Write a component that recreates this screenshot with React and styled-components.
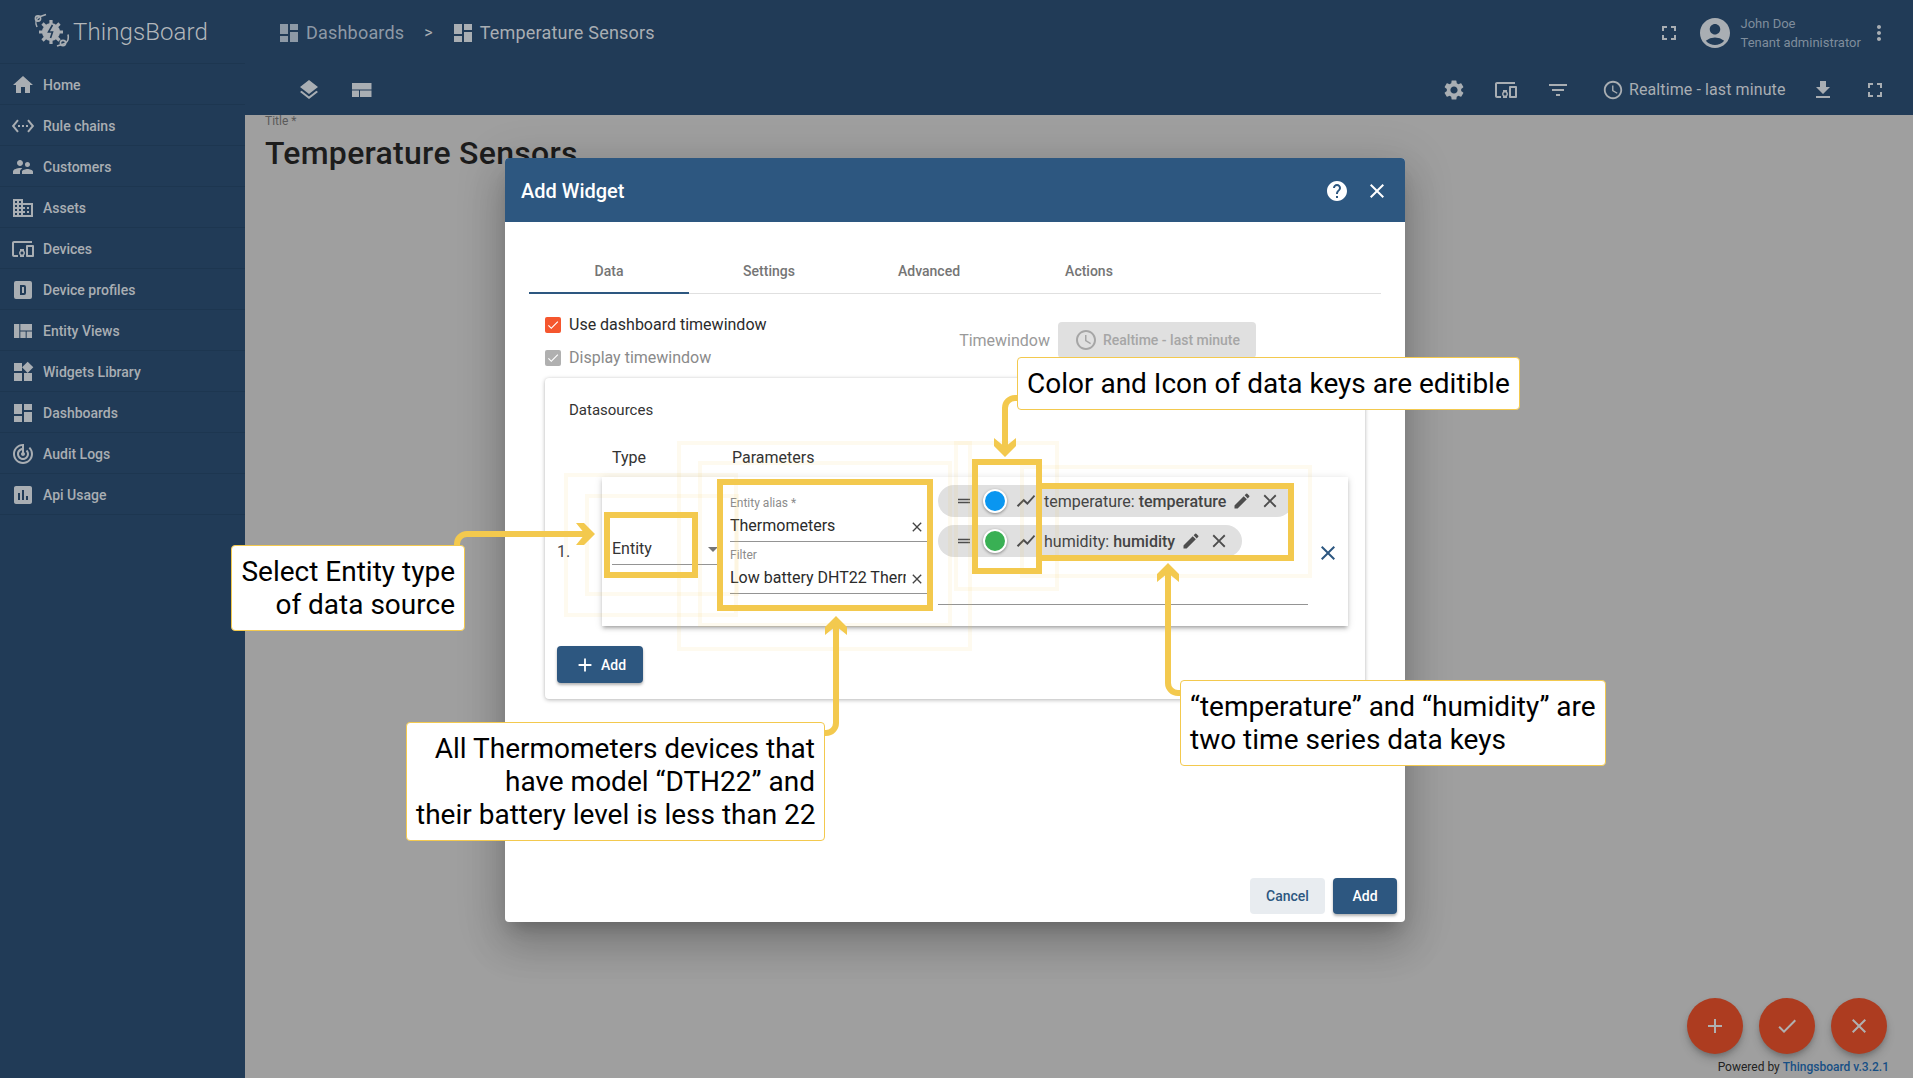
import React from "react";
import styled, { createGlobalStyle } from "styled-components";
import {
  MdHome, MdSettingsEthernet, MdSupervisorAccount, MdDomain, MdDevicesOther, MdViewQuilt,
  MdWidgets, MdDashboard, MdTrackChanges, MdInsertChart, MdLayers, MdFullscreen, MdAccountCircle,
  MdMoreVert, MdSettings, MdFilterList, MdAccessTime, MdFileDownload, MdHelp, MdClose, MdAdd,
  MdCheck, MdEdit, MdShowChart, MdDragHandle,
} from "react-icons/md";

const GlobalStyle = createGlobalStyle`
  html, body { margin: 0; height: 100%; overflow: hidden; }
  body { font-family: Roboto, "Liberation Sans", sans-serif; background: #9f9f9f; }
  * { box-sizing: border-box; }
`;

const YELLOW = "#f3c94e";

// device profile icon (rounded box with a D)
const ProfileIcon = ({ size = 24 }) => (
  <svg width={size} height={size} viewBox="0 0 24 24" fill="currentColor">
    <path fillRule="evenodd" d="M5 3h14a2 2 0 0 1 2 2v14a2 2 0 0 1-2 2H5a2 2 0 0 1-2-2V5a2 2 0 0 1 2-2zm4 4v10h4a2 2 0 0 0 2-2V9a2 2 0 0 0-2-2H9zm2 2h2v6h-2V9z" />
  </svg>
);

const LayoutIcon = () => (
  <svg width="22" height="20" viewBox="0 0 22 20" fill="currentColor">
    <path d="M1 3h19.500v6.500H1zM1 10.500h7v6.500H1zM9 10.500h11.500v6.500H9z" />
  </svg>
);

const Logo = () => (
  <svg width="46" height="38" viewBox="0 0 46 38" fill="none" stroke="#a9aeb3">
    <path d="M7 14C5 10 6 6 9 4l7-2.500M27 33l8-2.500c3-2 4-5 3-9" strokeWidth="1.600" />
    <circle cx="8" cy="5.500" r="2.600" strokeWidth="1.600" />
    <circle cx="33" cy="30" r="2.600" strokeWidth="1.600" />
    <g stroke="#a9aeb3" strokeWidth="3.200">
      <path d="M21 7v24M9 19h24M12.500 10.500l17 17M29.500 10.500l-17 17" />
    </g>
    <circle cx="21" cy="19" r="9" fill="#a9aeb3" stroke="none" />
    <path d="M22.500 12l-4 7h4l-2 6" stroke="#213b57" strokeWidth="1.600" />
  </svg>
);

const NAV = [
  { label: "Home", icon: MdHome },
  { label: "Rule chains", icon: MdSettingsEthernet },
  { label: "Customers", icon: MdSupervisorAccount },
  { label: "Assets", icon: MdDomain },
  { label: "Devices", icon: MdDevicesOther },
  { label: "Device profiles", icon: ProfileIcon },
  { label: "Entity Views", icon: MdViewQuilt },
  { label: "Widgets Library", icon: MdWidgets },
  { label: "Dashboards", icon: MdDashboard },
  { label: "Audit Logs", icon: MdTrackChanges },
  { label: "Api Usage", icon: MdInsertChart },
];

const KEYS = [
  { name: "temperature", color: "#0a96f0" },
  { name: "humidity", color: "#39b054" },
];

export default function App() {
  return (
    <Page>
      <GlobalStyle />
      <Sidebar>
        <Brand>
          <Logo />
          <BrandName>ThingsBoard</BrandName>
        </Brand>
        {NAV.map(({ label, icon: Icon }) => (
          <NavItem key={label}>
            <NavIcon><Icon size={24} /></NavIcon>
            {label}
          </NavItem>
        ))}
      </Sidebar>

      <Main>
        <Header>
          <TopRow>
            <Crumb $dim><MdDashboard size={24} />Dashboards</Crumb>
            <CrumbSep>&gt;</CrumbSep>
            <Crumb><MdDashboard size={24} />Temperature Sensors</Crumb>
            <Spacer />
            <MdFullscreen size={24} />
            <Avatar><MdAccountCircle size={36} /></Avatar>
            <User>
              <div>John Doe</div>
              <div>Tenant administrator</div>
            </User>
            <MoreIcon><MdMoreVert size={24} /></MoreIcon>
          </TopRow>
          <ToolRow>
            <ToolLeft>
              <MdLayers size={24} />
              <LayoutIcon />
            </ToolLeft>
            <Spacer />
            <ToolRight>
              <MdSettings size={24} />
              <MdDevicesOther size={24} />
              <MdFilterList size={24} />
              <TimeText><MdAccessTime size={22} />Realtime - last minute</TimeText>
              <MdFileDownload size={24} />
              <MdFullscreen size={24} />
            </ToolRight>
          </ToolRow>
        </Header>
        <Content>
          <TitleLabel>Title *</TitleLabel>
          <DashTitle>Temperature Sensors</DashTitle>
        </Content>
      </Main>

      <FabRow>
        <Fab><MdAdd size={24} /></Fab>
        <Fab><MdCheck size={24} /></Fab>
        <Fab><MdClose size={24} /></Fab>
      </FabRow>
      <Powered>Powered by <b>Thingsboard v.3.2.1</b></Powered>

      <Scrim>
        <Dialog>
          <DialogHead>
            <DialogTitle>Add Widget</DialogTitle>
            <Spacer />
            <HeadIcon><MdHelp size={24} /></HeadIcon>
            <HeadIcon><MdClose size={24} /></HeadIcon>
          </DialogHead>

          <Tabs>
            <Tab $active>Data</Tab>
            <Tab>Settings</Tab>
            <Tab>Advanced</Tab>
            <Tab>Actions</Tab>
          </Tabs>

          <Options>
            <div>
              <CheckRow>
                <Check $on><MdCheck size={14} /></Check>
                Use dashboard timewindow
              </CheckRow>
              <CheckRow $dim>
                <Check><MdCheck size={14} /></Check>
                Display timewindow
              </CheckRow>
            </div>
            <TimeWindow>
              Timewindow
              <TimeButton><MdAccessTime size={24} />Realtime - last minute</TimeButton>
            </TimeWindow>
          </Options>

          <Panel>
            <PanelTitle>Datasources</PanelTitle>
            <ColHeads>
              <TypeHead>Type</TypeHead>
              <span>Parameters</span>
            </ColHeads>
            <SourceRow>
              <RowIndex>1.</RowIndex>
              <SourceCard>
                <TypeCol>
                  <Select>Entity<Caret /></Select>
                </TypeCol>
                <ParamCol>
                  <Field>
                    <FieldLabel>Entity alias *</FieldLabel>
                    <FieldValue>
                      <FieldText>Thermometers</FieldText>
                      <ClearIcon><MdClose size={16} /></ClearIcon>
                    </FieldValue>
                  </Field>
                  <Field>
                    <FieldLabel>Filter</FieldLabel>
                    <FieldValue>
                      <FieldText>Low battery DHT22 Thermometers</FieldText>
                      <ClearIcon><MdClose size={16} /></ClearIcon>
                    </FieldValue>
                  </Field>
                </ParamCol>
                <ChipCol>
                  {KEYS.map((k) => (
                    <Chip key={k.name}>
                      <MdDragHandle size={18} />
                      <Dot $color={k.color} />
                      <ChartIcon><MdShowChart size={22} /></ChartIcon>
                      <ChipText>{k.name}: <b>{k.name}</b></ChipText>
                      <PenIcon><MdEdit size={20} /></PenIcon>
                      <MdClose size={22} />
                    </Chip>
                  ))}
                </ChipCol>
                <RemoveIcon><MdClose size={24} /></RemoveIcon>
              </SourceCard>
            </SourceRow>
            <AddButton><MdAdd size={22} />Add</AddButton>
          </Panel>

          <Spacer />
          <Footer>
            <CancelButton>Cancel</CancelButton>
            <SubmitButton>Add</SubmitButton>
          </Footer>
        </Dialog>
      </Scrim>

      <Marks viewBox="0 0 1913 1078" fill="none">
        <g stroke={YELLOW} strokeOpacity="0.09" strokeWidth="4">
          <rect x="587" y="496" width="150" height="98" />
          <rect x="566" y="475" width="170" height="140" />
          <rect x="700" y="463" width="250" height="162" />
          <rect x="679" y="443" width="291" height="206" />
          <rect x="956" y="443" width="101" height="146" />
          <rect x="1022" y="467" width="288" height="109" />
        </g>
        <g stroke={YELLOW} strokeWidth="6">
          <rect x="607" y="515" width="88" height="60" />
          <rect x="720" y="482" width="210" height="126" />
          <rect x="1039" y="486" width="252" height="72" />
          <rect x="975" y="462" width="64" height="109" />
          <path d="M457 548v-4a10 10 0 0 1 10-10h122" />
          <path d="M1020 398h-5a10 10 0 0 0-10 10v42" />
          <path d="M820 733h6a10 10 0 0 0 10-10v-100" />
          <path d="M1184 693h-6a10 10 0 0 1-10-10v-112" />
        </g>
        <g fill={YELLOW}>
          <path d="M595 534l-11-11h-8l9 11-9 11h8z" />
          <path d="M1005 457l-11-11v-8l11 9 11-9v8z" />
          <path d="M836 616l-11 11v8l11-9 11 9v-8z" />
          <path d="M1168 563l-11 11v8l11-9 11 9v-8z" />
        </g>
      </Marks>

      <Callout $x={231} $y={545} $w={234} $right>Select Entity type<br />of data source</Callout>
      <Callout $x={406} $y={722} $w={419} $right>All Thermometers devices that<br />have model “DTH22” and<br />their battery level is less than 22</Callout>
      <Callout $x={1017} $y={357} $w={503}>Color and Icon of data keys are editible</Callout>
      <Callout $x={1180} $y={680} $w={426}>“temperature” and “humidity” are<br />two time series data keys</Callout>
    </Page>
  );
}

const Page = styled.div`
  position: relative;
  display: flex;
  width: 100%;
  height: 100vh;
  overflow: hidden;
`;

const Spacer = styled.div`
  flex: 1;
`;

const Sidebar = styled.nav`
  width: 245px;
  flex: none;
  background: #213b57;
  color: #a9aeb3;
`;

const Brand = styled.div`
  display: flex;
  align-items: center;
  height: 64px;
  padding-left: 30px;
  border-bottom: 1px solid #1d3650;
`;

const BrandName = styled.span`
  margin-left: -3px;
  font-size: 24px;
  font-weight: 300;
  letter-spacing: 0.1px;
  color: #b3b7bb;
`;

const NavItem = styled.div`
  display: flex;
  align-items: center;
  height: 41px;
  padding: 1px 0 0 11px;
  font-size: 14px;
  font-weight: 500;
  border-bottom: 1px solid #1d3650;
`;

const NavIcon = styled.span`
  display: flex;
  width: 32px;
`;

const Main = styled.main`
  flex: 1;
  min-width: 0;
  display: flex;
  flex-direction: column;
`;

const Header = styled.header`
  height: 115px;
  background: #213b57;
  color: #a9aeb3;
`;

const TopRow = styled.div`
  display: flex;
  align-items: center;
  height: 65px;
  padding: 0 22px 0 32px;
`;

const Crumb = styled.span`
  display: flex;
  align-items: center;
  gap: 5px;
  font-size: 18px;
  letter-spacing: 0.2px;
  color: ${(p) => (p.$dim ? "#8d99a6" : "#a9aeb3")};
`;

const CrumbSep = styled.span`
  margin: 0 18px 0 20px;
  font-size: 16px;
`;

const Avatar = styled.span`
  display: flex;
  margin: 0 8px 0 16px;
`;

const User = styled.div`
  width: 127.500px;
  font-size: 13px;
  line-height: 19px;
  color: #7f8d9c;
`;

const MoreIcon = styled.span`
  display: flex;
  margin-left: -1px;
`;

const ToolRow = styled.div`
  display: flex;
  align-items: center;
  height: 49px;
  padding: 0 26px 0 52px;
`;

const ToolLeft = styled.div`
  display: flex;
  align-items: center;
  gap: 30px;
`;

const ToolRight = styled.div`
  display: flex;
  align-items: center;
  gap: 28px;
`;

const TimeText = styled.span`
  display: flex;
  align-items: center;
  gap: 5px;
  margin: 0 -2.500px 0 4.500px;
  font-size: 16px;
  letter-spacing: 0.1px;
`;

const Content = styled.div`
  flex: 1;
  padding-left: 20px;
  color: #1c1c1c;
`;

const TitleLabel = styled.div`
  font-size: 12px;
  line-height: 13px;
  color: #5a5a5a;
`;

const DashTitle = styled.h1`
  margin: 6px 0 0;
  font-size: 32px;
  line-height: 38px;
  font-weight: 500;
  letter-spacing: 0.28px;
`;

const FabRow = styled.div`
  position: absolute;
  right: 26px;
  bottom: 24px;
  display: flex;
  gap: 16px;
`;

const Fab = styled.div`
  display: flex;
  align-items: center;
  justify-content: center;
  width: 56px;
  height: 56px;
  border-radius: 50%;
  background: #ad3c20;
  color: #b0b0b0;
  box-shadow: 0 3px 5px -1px rgba(0, 0, 0, 0.2), 0 6px 10px 0 rgba(0, 0, 0, 0.14);
`;

const Powered = styled.div`
  position: absolute;
  right: 24px;
  bottom: 4px;
  font-size: 12px;
  color: #222;

  b {
    font-weight: 500;
    color: #174f85;
  }
`;

const Scrim = styled.div`
  position: absolute;
  inset: 0;
  display: flex;
  align-items: center;
  justify-content: center;
  padding: 2px 3px 0 0;
`;

const Dialog = styled.section`
  display: flex;
  flex-direction: column;
  width: 900px;
  height: 764px;
  background: #fff;
  border-radius: 4px;
  overflow: hidden;
  box-shadow: 0 11px 15px -7px rgba(0, 0, 0, 0.2), 0 24px 38px 3px rgba(0, 0, 0, 0.14), 0 9px 46px 8px rgba(0, 0, 0, 0.12);
`;

const DialogHead = styled.div`
  display: flex;
  align-items: center;
  flex: none;
  height: 64px;
  padding: 2px 16px 0 16px;
  background: #2d5780;
  color: #fff;
`;

const DialogTitle = styled.h2`
  margin: 0;
  font-size: 20px;
  font-weight: 500;
`;

const HeadIcon = styled.span`
  display: flex;
  margin-left: 16px;
`;

const Tabs = styled.div`
  display: flex;
  flex: none;
  height: 48px;
  margin: 24px 24px 0;
  border-bottom: 1px solid #e0e0e0;
`;

const Tab = styled.div`
  display: flex;
  align-items: center;
  justify-content: center;
  width: 160px;
  height: 48px;
  padding-top: 4px;
  font-size: 14px;
  font-weight: 500;
  color: #757575;
  border-bottom: 2px solid ${(p) => (p.$active ? "#2d5780" : "transparent")};
`;

const Options = styled.div`
  display: flex;
  align-items: center;
  justify-content: space-between;
  flex: none;
  margin: 14px 149px 4px 40px;
`;

const CheckRow = styled.label`
  display: flex;
  align-items: center;
  gap: 8px;
  height: 33px;
  font-size: 16px;
  color: ${(p) => (p.$dim ? "#8a8a8a" : "#2b2b2b")};
`;

const Check = styled.span`
  display: flex;
  align-items: center;
  justify-content: center;
  width: 16px;
  height: 16px;
  border-radius: 2px;
  color: #fff;
  background: ${(p) => (p.$on ? "#f5562e" : "#b0b0b0")};
`;

const TimeWindow = styled.div`
  display: flex;
  align-items: center;
  gap: 8px;
  margin-top: -2px;
  font-size: 16px;
  color: #9a9a9a;
`;

const TimeButton = styled.div`
  display: flex;
  align-items: center;
  gap: 5px;
  height: 36px;
  width: 198px;
  padding-left: 16px;
  border-radius: 4px;
  background: #e0e0e0;
  font-size: 14px;
  font-weight: 500;
  color: #a6a6a6;
`;

const Panel = styled.div`
  flex: none;
  width: 820px;
  height: 321px;
  margin-left: 40px;
  padding: 0 17px 0 12px;
  border-radius: 4px;
  background: #fff;
  box-shadow: 0 1px 4px rgba(0, 0, 0, 0.28), 0 0 2px rgba(0, 0, 0, 0.06);
`;

const PanelTitle = styled.div`
  padding: 23px 0 0 12px;
  height: 42px;
  font-size: 15px;
  line-height: 18px;
  color: #333;
`;

const ColHeads = styled.div`
  display: flex;
  padding: 28px 0 0 55px;
  font-size: 16px;
  line-height: 20px;
  height: 57px;
  color: #333;
`;

const TypeHead = styled.span`
  width: 120px;
`;

const SourceRow = styled.div`
  display: flex;
  align-items: center;
`;

const RowIndex = styled.span`
  width: 45px;
  font-size: 16px;
  color: #444;
`;

const SourceCard = styled.div`
  display: flex;
  width: 746px;
  height: 149px;
  padding-left: 10px;
  background: #fff;
  box-shadow: 0 3px 3px -2px rgba(0, 0, 0, 0.2), 0 3px 4px 0 rgba(0, 0, 0, 0.14), 0 1px 8px 0 rgba(0, 0, 0, 0.12);
`;

const TypeCol = styled.div`
  width: 118px;
  flex: none;
  padding-top: 57px;
`;

const Select = styled.div`
  position: relative;
  width: 106px;
  height: 31px;
  font-size: 16px;
  line-height: 30px;
  color: #333;
  border-bottom: 1px solid #949494;
`;

const Caret = styled.span`
  position: absolute;
  right: 0;
  top: 13px;
  border-left: 5px solid transparent;
  border-right: 5px solid transparent;
  border-top: 5px solid #757575;
`;

const ParamCol = styled.div`
  display: flex;
  flex-direction: column;
  gap: 2px;
  width: 197px;
  flex: none;
  padding-top: 15px;
`;

const Field = styled.div`
  height: 50px;
  padding-top: 4px;
  border-bottom: 1px solid #949494;
`;

const FieldLabel = styled.div`
  font-size: 12px;
  line-height: 14px;
  margin-bottom: 3px;
  color: #8c8c8c;
`;

const FieldValue = styled.div`
  display: flex;
  align-items: center;
  height: 24px;
  font-size: 16px;
  color: #2b2b2b;
`;

const FieldText = styled.span`
  flex: 0 0 176px;
  overflow: hidden;
  white-space: nowrap;
`;

const ClearIcon = styled.span`
  display: flex;
  margin: 3px 0 0 3px;
  color: #444;
`;

const ChipCol = styled.div`
  display: flex;
  flex-direction: column;
  align-items: flex-start;
  gap: 8px;
  width: 370px;
  height: 128px;
  flex: none;
  margin-left: 11px;
  padding-top: 8px;
  border-bottom: 1px solid #949494;
`;

const Chip = styled.div`
  display: flex;
  align-items: center;
  height: 32px;
  padding: 0 12px 0 17px;
  border-radius: 16px;
  background: #e0e0e0;
  color: #4d4d4d;
`;

const Dot = styled.span`
  width: 24px;
  height: 24px;
  margin: 0 8px 0 10px;
  border-radius: 50%;
  background: ${(p) => p.$color};
  border: 2px solid #fff;
  box-shadow: 0 1px 3px rgba(0, 0, 0, 0.4);
`;

const ChartIcon = styled.span`
  display: flex;
  margin-right: 7px;
`;

const ChipText = styled.span`
  font-size: 16px;
  color: #444;
  white-space: nowrap;

  b {
    font-weight: 500;
  }
`;

const PenIcon = styled.span`
  display: flex;
  margin: 0 7px 0 6px;
`;

const RemoveIcon = styled.span`
  display: flex;
  align-self: center;
  margin: 3px 0 0 8px;
  color: #2d5780;
`;

const AddButton = styled.div`
  display: flex;
  align-items: center;
  gap: 5px;
  width: 86px;
  height: 37px;
  margin-top: 20px;
  padding-left: 17px;
  border-radius: 4px;
  background: #2d5780;
  color: #fff;
  font-size: 14px;
  font-weight: 500;
  box-shadow: 0 2px 3px rgba(0, 0, 0, 0.3);
`;

const Footer = styled.div`
  display: flex;
  justify-content: flex-end;
  gap: 8px;
  flex: none;
  padding: 0 8px 8px;
`;

const CancelButton = styled.div`
  display: flex;
  align-items: center;
  justify-content: center;
  width: 75px;
  height: 36px;
  border-radius: 4px;
  background: #e8ecf0;
  color: #2d5780;
  font-size: 14px;
  font-weight: 500;
`;

const SubmitButton = styled(CancelButton)`
  width: 64px;
  background: #2d5780;
  color: #fff;
  box-shadow: 0 2px 3px rgba(0, 0, 0, 0.3);
`;

const Marks = styled.svg`
  position: absolute;
  left: 0;
  top: 0;
  width: 1913px;
  height: 1078px;
  pointer-events: none;
`;

const Callout = styled.div`
  position: absolute;
  left: ${(p) => p.$x}px;
  top: ${(p) => p.$y}px;
  width: ${(p) => p.$w}px;
  padding: 9px;
  background: #fff;
  border: 1px solid ${YELLOW};
  border-radius: 4px;
  font-size: 28px;
  line-height: 33px;
  color: #000;
  white-space: nowrap;
  text-align: ${(p) => (p.$right ? "right" : "left")};
`;
